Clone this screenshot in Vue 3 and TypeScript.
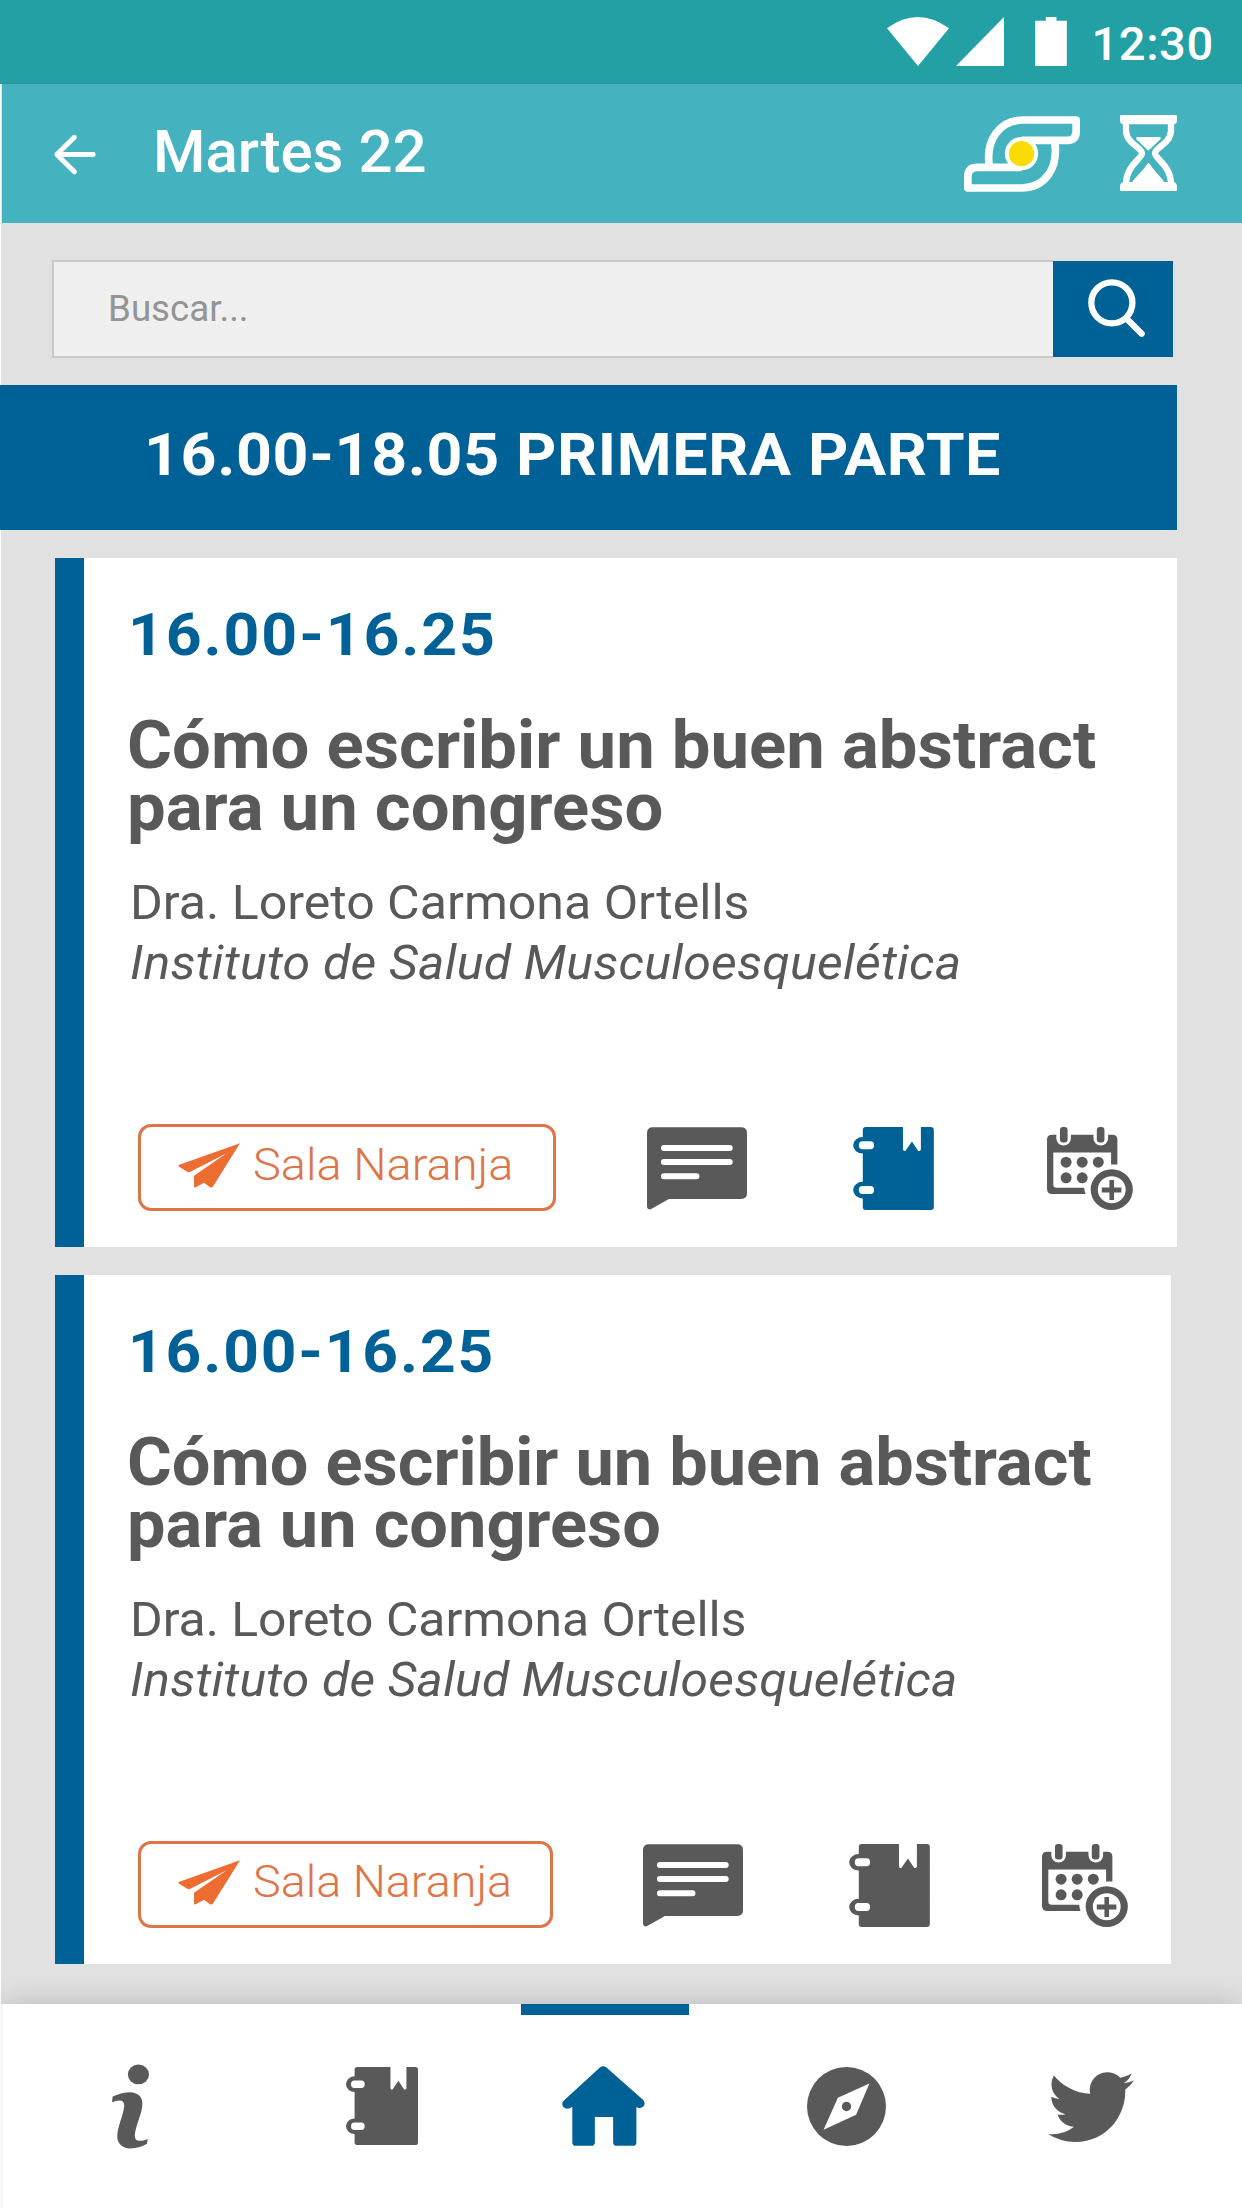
<script setup lang="ts">
interface Session {
  id: number
  time: string
  title: string
  speaker: string
  centre: string
  room: string
  saved: boolean
}

const sessions: Session[] = [1, 2].map((id) => ({
  id,
  time: '16.00-16.25',
  title: 'Cómo escribir un buen abstract para un congreso',
  speaker: 'Dra. Loreto Carmona Ortells',
  centre: 'Instituto de Salud Musculoesquelética',
  room: 'Sala Naranja',
  saved: id === 1,
}))

const notebook =
  'M38 0H150V68Q151 74 157 72L177 44L196 72Q203 74 204 68V0H234Q243 0 243 9V241Q243 250 234 250H38Q29 250 29 241V215A29 25 0 0 1 29 165V80A29 25 0 0 1 29 30V9Q29 0 38 0ZM28 43A11 12 0 0 0 28 67H52A11 12 0 0 0 52 43ZM28 178A11 12 0 0 0 28 202H52A11 12 0 0 0 52 178Z'
</script>

<template>
  <div class="screen">
    <div class="status">
      <svg class="wifi" viewBox="0 0 186 147"><path d="M0 34Q92-34 186 34L93 147Z" /></svg>
      <svg class="signal" viewBox="0 0 144 147"><path d="M144 0V147H0Z" /></svg>
      <svg class="battery" viewBox="0 0 95 147"><path d="M32 0H64V11H95V147H0V11H32Z" /></svg>
      <span class="clock">12:30</span>
    </div>

    <header class="bar">
      <svg class="back" viewBox="0 0 126 118">
        <path d="M61 7L8 59L61 111M8 59H118" />
      </svg>
      <h1>Martes 22</h1>
      <svg class="logo" viewBox="312 348 347 228">
        <path d="M388 502C374 418 420 360 490 360H648V393Q648 421 622 421H484" />
        <path d="M583 422C597 506 553 564 484 564H323V530Q323 502 352 502H484" />
        <circle class="ring" cx="484" cy="461" r="50" />
        <circle class="sun" cx="484" cy="461" r="38" />
      </svg>
      <svg class="glass" viewBox="30 30 171 228">
        <path class="fill" d="M34 30H197Q201 30 201 34V47Q201 57 190 58H41Q30 57 30 47V34Q30 30 34 30ZM34 258H197Q201 258 201 254V243Q199 232 190 231H41Q32 232 30 243V254Q30 258 34 258Z" />
        <path class="edge" d="M48 52V78C50 116 96 128 96 145C96 162 48 180 48 238M183 52V78C181 116 135 128 135 145C135 162 183 180 183 238" />
        <path class="fill" d="M81 96H150Q155 98 151 103L118 134Q115 137 112 134L79 103Q76 98 81 96ZM115 173Q119 175 127 188L161 228V240H68V228L104 188Q111 176 115 173Z" />
      </svg>
    </header>

    <div class="search">
      <span class="field"><span>Buscar...</span></span>
      <span class="go">
        <svg viewBox="0 0 172 172">
          <circle cx="72" cy="69" r="62" />
          <path d="M119 119L162 162" />
        </svg>
      </span>
    </div>

    <h2 class="band"><span>16.00-18.05 PRIMERA PARTE</span></h2>

    <article v-for="s in sessions" :key="s.id" class="card" :class="{ narrow: !s.saved }">
      <div class="time">{{ s.time }}</div>
      <h3>{{ s.title }}</h3>
      <div class="who">{{ s.speaker }}</div>
      <div class="where">{{ s.centre }}</div>
      <div class="actions">
        <div class="room">
          <svg viewBox="0 0 186 134">
            <path d="M186 0L105 130Q102 135 96 132L78 119L52 133Q48 134 48 129V98L146 30L37 86Q33 88 28 86L2 70Q-1 67 4 65Z" />
          </svg>
          <span>{{ s.room }}</span>
        </div>
        <svg class="comment" viewBox="0 0 301 249">
          <path d="M18 0H283Q301 0 301 18V198Q301 216 283 216H66L14 246Q2 252 0 240V18Q0 0 18 0Z" />
          <path class="lines" d="M51 63H249M51 105H249M51 148H149" />
        </svg>
        <svg class="note" :class="{ saved: s.saved }" viewBox="0 0 243 250"><path :d="notebook" fill-rule="evenodd" /></svg>
        <svg class="calendar" viewBox="0 0 259 250">
          <path d="M16 23H28V34A22 22 0 0 0 72 34V23H140V34A22 22 0 0 0 184 34V23H197Q212 23 212 38V113H193V77H19V173Q19 183 29 183H112Q113 194 116 202H16Q0 202 0 186V38Q0 23 16 23Z" />
          <rect x="39" y="0" width="23" height="47" rx="9" />
          <rect x="150" y="0" width="23" height="47" rx="9" />
          <circle v-for="c in 3" :key="c" :cx="c * 48.5 + 9" cy="106" r="16.5" />
          <circle v-for="c in 2" :key="c + 3" :cx="c * 48.5 + 9" cy="153" r="16.5" />
          <path fill-rule="evenodd" d="M195 127A63 61 0 1 0 195 250A63 61 0 1 0 195 127ZM195 148A42 41 0 1 1 195 230A42 41 0 1 1 195 148Z" />
          <path d="M188 160H202V182H224V197H202V220H188V197H165V182H188Z" />
        </svg>
      </div>
    </article>

    <nav class="tabs">
      <svg class="t-info" viewBox="0 0 112 254">
        <ellipse cx="80" cy="30" rx="32" ry="30" />
        <path d="M2 97Q30 84 56 84C84 86 96 104 91 130C86 160 72 184 69 213Q69 232 84 231Q96 231 108 225L106 240Q82 254 56 254C30 253 14 238 16 214C18 184 34 154 37 126Q38 109 22 109Q11 109 0 114Z" />
      </svg>
      <svg class="t-note" viewBox="0 0 243 250" preserveAspectRatio="none"><path :d="notebook" fill-rule="evenodd" /></svg>
      <svg class="t-home" viewBox="0 0 250 240">
        <path d="M114 4Q124-4 134 4L244 101Q252 110 247 119Q240 128 228 125L224 123V229Q224 240 213 240H165Q154 240 154 229V153H99V229Q99 240 88 240H42Q31 240 31 229V122L24 127Q13 131 4 123Q-3 113 5 104Z" />
      </svg>
      <svg class="t-compass" viewBox="0 0 238 238">
        <circle cx="119" cy="119" r="119" />
        <path class="needle" d="M188 50L148 144L50 189L93 93Z" />
        <circle cx="119" cy="119" r="14" />
      </svg>
      <svg class="t-bird" viewBox="0 1.9 24 19.6" preserveAspectRatio="none">
        <path d="M23.953 4.57a10 10 0 01-2.825.775 4.958 4.958 0 002.163-2.723c-.951.555-2.005.959-3.127 1.184a4.92 4.92 0 00-8.384 4.482C7.69 8.095 4.067 6.13 1.64 3.162a4.822 4.822 0 00-.666 2.475c0 1.71.87 3.213 2.188 4.096a4.904 4.904 0 01-2.228-.616v.06a4.923 4.923 0 003.946 4.827 4.996 4.996 0 01-2.212.085 4.936 4.936 0 004.604 3.417 9.867 9.867 0 01-6.102 2.105c-.39 0-.779-.023-1.17-.067a13.995 13.995 0 007.557 2.209c9.053 0 13.998-7.496 13.998-13.985 0-.21 0-.42-.015-.63A9.935 9.935 0 0024 4.59z" />
      </svg>
    </nav>
  </div>
</template>

<style>
body {
  margin: 0;
  background: #fff;
}
</style>

<style scoped>
.screen {
  width: 1242px;
  height: 2208px;
  box-sizing: border-box;
  overflow: hidden;
  display: flex;
  flex-direction: column;
  font-family: Roboto, "Liberation Sans", sans-serif;
  color: #595959;
  background: linear-gradient(90deg, #fff 1px, #e1e1e1 1px);
}
svg {
  display: block;
  flex: none;
  overflow: visible;
  fill: #595959;
}
h1, h2, h3 {
  margin: 0;
}
h1, h2, .time, .who, .where, .room span, .clock, .field {
  white-space: nowrap;
}

.status {
  height: 84px;
  flex: none;
  box-sizing: border-box;
  display: flex;
  align-items: flex-start;
  padding: 17px 0 0 887px;
  background: #22a0a4;
  border-bottom: 2px solid #2c989d;
}
.status svg {
  height: 49px;
  fill: #fff;
}
.wifi { width: 62px; }
.signal { width: 48px; margin-left: 7px; }
.battery { width: 32px; margin-left: 31px; }
.clock {
  margin-left: 24.5px;
  font-size: 47px;
  font-weight: 500;
  line-height: 54px;
  letter-spacing: 0.6px;
  color: #fff;
}

.bar {
  height: 139px;
  flex: none;
  display: flex;
  align-items: center;
  margin-left: 2px;
  background: #45b3bf;
}
.back {
  width: 42px;
  height: 39px;
  margin: 1px 0 0 52px;
}
.back path {
  fill: none;
  stroke: #fff;
  stroke-width: 15;
  stroke-linecap: round;
  stroke-linejoin: round;
}
h1 {
  width: 811px;
  margin: 0 0 3px 57px;
  font-size: 60px;
  font-weight: 500;
  line-height: 70px;
  color: #fff;
}
.logo { width: 116px; height: 76px; margin-top: 1px; }
.logo path {
  fill: none;
  stroke: #fff;
  stroke-width: 23;
  stroke-linejoin: round;
}
.logo .ring { fill: #fff; }
.logo .sun { fill: #fcdc00; }
.glass { width: 57px; height: 76px; margin: -1px 0 0 40px; }
.glass .fill { fill: #fff; }
.glass .edge { fill: none; stroke: #fff; stroke-width: 19; }

.search {
  flex: none;
  display: flex;
  width: 1122px;
  height: 98px;
  margin: 37px 0 0 52px;
}
.field {
  width: 1001px;
  box-sizing: border-box;
  border: 2px solid #c9c9c9;
  border-right: 0;
  background: #efefef;
  padding-left: 54px;
  font-size: 36px;
  line-height: 95px;
  color: #949494;
}
.field span {
  display: inline-block;
  transform: scaleX(1.02);
  transform-origin: 0 0;
}
.go {
  width: 120px;
  height: 96px;
  margin-top: 1px;
  background: #006197;
}
.go svg {
  width: 57px;
  height: 57px;
  margin: 19px 0 0 35px;
  fill: none;
  stroke: #fff;
  stroke-width: 19;
  stroke-linecap: round;
}

.band {
  flex: none;
  width: 1177px;
  height: 145px;
  box-sizing: border-box;
  margin-top: 27px;
  padding-left: 144px;
  background: #006197;
  font-size: 60px;
  font-weight: 700;
  line-height: 139px;
  letter-spacing: 0.6px;
  color: #fff;
}
.band span {
  display: inline-block;
  transform: scaleX(1.045);
  transform-origin: 0 0;
}

.card {
  --stretch: 1.043;
  flex: none;
  width: 1122px;
  height: 689px;
  box-sizing: border-box;
  margin: 28px 0 0 55px;
  border-left: 29px solid #006197;
  background: #fff;
  padding: 46.5px 0 0 44px;
}
.narrow {
  --stretch: 1.038;
  width: 1116px;
}
.time, h3, .who, .where, .room span {
  transform: scaleX(var(--stretch));
  transform-origin: 0 0;
}
.time {
  width: 400px;
  font-size: 60px;
  font-weight: 700;
  line-height: 60px;
  letter-spacing: 1.8px;
  color: #006197;
}
h3 {
  width: 980px;
  margin: 50px 0 0 -1px;
  font-size: 66px;
  font-weight: 700;
  line-height: 62px;
}
.who, .where {
  width: 900px;
  font-size: 48px;
  line-height: 60px;
  margin-left: 2px;
}
.who { margin-top: 34px; }
.where {
  font-style: italic;
  letter-spacing: 0.2px;
}
.actions {
  display: flex;
  align-items: center;
  height: 87px;
  margin-top: 131px;
  margin-left: 10px;
}
.room {
  width: 418px;
  height: 87px;
  box-sizing: border-box;
  display: flex;
  align-items: center;
  border: 3px solid #dd7548;
  border-radius: 13px;
  padding-left: 37px;
  color: #dd7548;
  font-size: 45px;
  font-weight: 300;
}
.room svg {
  width: 62px;
  height: 45px;
  margin-top: -4px;
  fill: #ec6c32;
}
.room span {
  margin-left: 13px;
  line-height: 54px;
  margin-top: -5px;
}
.comment { width: 100px; height: 83px; margin-left: 91px; }
.comment .lines {
  fill: none;
  stroke: #fff;
  stroke-width: 18;
  stroke-linecap: round;
}
.note { width: 81px; height: 83px; margin-left: 106px; }
.saved { fill: #006197; }
.calendar { width: 86px; height: 83px; margin-left: 113px; }
.actions > svg { margin-top: 2px; }
.narrow .room { width: 415px; }
.narrow .comment { margin-left: 90px; }
.narrow .calendar { margin-left: 112px; }

.tabs {
  position: relative;
  flex: none;
  display: flex;
  align-items: center;
  box-sizing: border-box;
  height: 204px;
  margin: 40px 0 0;
  border-left: 3px solid #f8f8f8;
  background: #fff;
  box-shadow: 0 -2px 28px rgba(0, 0, 0, 0.16);
}
.tabs::before {
  content: "";
  position: absolute;
  left: 518px;
  top: 0;
  width: 168px;
  height: 11px;
  background: #006197;
}
.t-info { width: 37px; height: 85px; margin-left: 109px; }
.t-note { width: 72px; height: 78px; margin-left: 197px; }
.t-home { width: 83px; height: 80px; margin-left: 144px; fill: #006197; }
.t-compass { width: 79px; height: 79px; margin-left: 162px; }
.t-compass .needle { fill: #fff; }
.t-bird { width: 86px; height: 70px; margin-left: 162px; }
</style>
